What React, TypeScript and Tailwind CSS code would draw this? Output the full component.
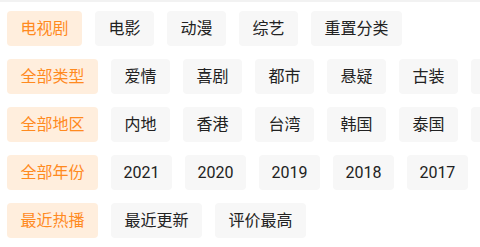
import React from 'react';

const rows: { label: string; items: string[] }[] = [
  { label: '电视剧', items: ['电影', '动漫', '综艺', '重置分类'] },
  { label: '全部类型', items: ['爱情', '喜剧', '都市', '悬疑', '古装', '武侠', '科幻'] },
  { label: '全部地区', items: ['内地', '香港', '台湾', '韩国', '泰国', '日本', '美国'] },
  { label: '全部年份', items: ['2021', '2020', '2019', '2018', '2017', '2016', '2015'] },
  { label: '最近热播', items: ['最近更新', '评价最高'] },
];

const App: React.FC = () => {
  return (
    <div
      className="w-[480px] h-[247px] bg-white overflow-hidden"
      style={{ fontFamily: "Roboto, 'Noto Sans CJK SC', sans-serif" }}
    >
      <div className="h-[2px] bg-[#f2f2f2]" />
      <div className="flex flex-col gap-[13px] pt-[9px] pl-[7px]">
        {rows.map((row) => (
          <div key={row.label} className="flex gap-[13px] overflow-hidden">
            <span className="shrink-0 h-[35px] flex items-center px-[13.5px] rounded-[4px] bg-[#ffeedd] text-[#ff8a1f] text-[16px]">
              {row.label}
            </span>
            {row.items.map((item) => (
              <span
                key={item}
                className={`shrink-0 h-[35px] flex items-center rounded-[4px] bg-[#f7f7f7] text-[#222222] text-[16px] ${
                  /^\d+$/.test(item) ? 'px-[12.5px]' : 'px-[13.5px]'
                }`}
              >
                {item}
              </span>
            ))}
          </div>
        ))}
      </div>
    </div>
  );
};

export default App;
